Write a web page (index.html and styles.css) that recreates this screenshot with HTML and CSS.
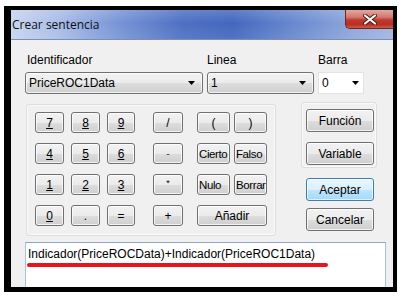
FILE: index.html
```html
<!DOCTYPE html>
<html lang="es">
<head>
    <meta charset="UTF-8">
    <meta name="viewport" content="width=device-width, initial-scale=1.0">
    <title>Crear sentencia</title>
    <link rel="stylesheet" href="styles.css">
</head>
<body>
    <div class="window">
        <div class="titlebar">
            <span class="title">Crear sentencia</span>
            <button class="close-button" aria-label="Cerrar">
                <svg viewBox="0 0 14 11" width="14" height="11">
                    <path d="M2 1.5 L12 9.5 M12 1.5 L2 9.5" stroke="#4a1a14" stroke-width="4" stroke-linecap="round"/>
                    <path d="M2 1.5 L12 9.5 M12 1.5 L2 9.5" stroke="#ffffff" stroke-width="2.2" stroke-linecap="round"/>
                </svg>
            </button>
        </div>

        <div class="dialog-body">
            <div class="fields">
                <div class="field field-id">
                    <label class="field-label">Identificador</label>
                    <div class="combo">
                        <span>PriceROC1Data</span>
                        <svg class="combo-arrow" viewBox="0 0 7 4"><path d="M0 0h7L3.5 4z"/></svg>
                    </div>
                </div>
                <div class="field field-line">
                    <label class="field-label">Linea</label>
                    <div class="combo">
                        <span>1</span>
                        <svg class="combo-arrow" viewBox="0 0 7 4"><path d="M0 0h7L3.5 4z"/></svg>
                    </div>
                </div>
                <div class="field field-bar">
                    <label class="field-label">Barra</label>
                    <div class="combo combo-plain">
                        <span>0</span>
                        <svg class="combo-arrow" viewBox="0 0 7 4"><path d="M0 0h7L3.5 4z"/></svg>
                    </div>
                </div>
            </div>

            <div class="middle">
                <div class="keypad">
                    <div class="key-row">
                        <div class="num-group">
                            <button class="btn key"><u>7</u></button>
                            <button class="btn key"><u>8</u></button>
                            <button class="btn key narrow"><u>9</u></button>
                        </div>
                        <button class="btn key op">/</button>
                        <div class="fn-group">
                            <button class="btn key fn">(</button>
                            <button class="btn key fn">)</button>
                        </div>
                    </div>
                    <div class="key-row">
                        <div class="num-group">
                            <button class="btn key"><u>4</u></button>
                            <button class="btn key"><u>5</u></button>
                            <button class="btn key narrow"><u>6</u></button>
                        </div>
                        <button class="btn key op small-sym">-</button>
                        <div class="fn-group">
                            <button class="btn key fn tight">Cierto</button>
                            <button class="btn key fn tight">Falso</button>
                        </div>
                    </div>
                    <div class="key-row">
                        <div class="num-group">
                            <button class="btn key"><u>1</u></button>
                            <button class="btn key"><u>2</u></button>
                            <button class="btn key narrow"><u>3</u></button>
                        </div>
                        <button class="btn key op small-sym star">*</button>
                        <div class="fn-group">
                            <button class="btn key fn tight">Nulo</button>
                            <button class="btn key fn tight">Borrar</button>
                        </div>
                    </div>
                    <div class="key-row">
                        <div class="num-group">
                            <button class="btn key"><u>0</u></button>
                            <button class="btn key">.</button>
                            <button class="btn key narrow">=</button>
                        </div>
                        <button class="btn key op">+</button>
                        <div class="fn-group">
                            <button class="btn key wide">Añadir</button>
                        </div>
                    </div>
                </div>

                <div class="side">
                    <div class="side-group">
                        <button class="btn side-button">Función</button>
                        <button class="btn side-button">Variable</button>
                    </div>
                    <button class="btn side-button btn-default">Aceptar</button>
                    <button class="btn side-button">Cancelar</button>
                </div>
            </div>

            <div class="expression">
                <span class="expression-text">Indicador(PriceROCData)+Indicador(PriceROC1Data)</span>
                <span class="mark"></span>
            </div>
        </div>
    </div>
</body>
</html>
```

FILE: styles.css
```css
* {
    margin: 0;
    padding: 0;
    box-sizing: border-box;
}

body {
    font-family: 'Liberation Sans', Arial, sans-serif;
    font-size: 12px;
    background-color: #FFFFFF;
    color: #000000;
}

.window {
    margin: 6px 0 0 4px;
    width: 393px;
    height: 286px;
    border-style: solid;
    border-color: #000000;
    border-width: 4px 4px 5px 7px;
    background-color: #F0F0F0;
    display: flex;
    flex-direction: column;
    overflow: hidden;
}

.titlebar {
    height: 30px;
    flex-shrink: 0;
    display: flex;
    align-items: flex-start;
    background:
        linear-gradient(rgba(255,255,255,0.16), rgba(255,255,255,0) 45%, rgba(255,255,255,0.08)),
        linear-gradient(to right, #C7D5EF 0%, #AABEE8 12%, #7795D6 28%, #4E6FC2 45%, #4467BE 58%, #6A8AD0 75%, #8FA8DC 90%, #A1B6E1 100%);
    border-bottom: 1px solid #7E8EAE;
}

.title {
    font-family: 'Open Sans', 'Noto Sans', sans-serif;
    font-size: 12px;
    line-height: 16px;
    margin: 7px 0 0 1px;
    color: #101010;
}

.close-button {
    margin-left: auto;
    width: 48px;
    height: 19px;
    border: 1px solid #6A2A22;
    border-top: none;
    border-right: none;
    border-radius: 0 0 0 5px;
    background: linear-gradient(#E4A79E 0%, #D3786C 40%, #C23A2C 55%, #B92E22 80%, #CF5A48 100%);
    display: flex;
    align-items: center;
    justify-content: center;
}

.dialog-body {
    flex: 1;
    padding: 13px 0 0 14px;
    overflow: hidden;
}

.fields {
    display: flex;
    gap: 4px;
}

.field-label {
    display: block;
    line-height: 14px;
    margin-bottom: 5px;
}

.field-id { width: 178px; }
.field-id .field-label { padding-left: 2px; }
.field-line { width: 107px; }
.field-bar { width: 46px; }

.combo {
    height: 22px;
    display: flex;
    align-items: center;
    justify-content: space-between;
    padding: 0 7px 0 3px;
    border: 1px solid #707070;
    border-radius: 3px;
    background: linear-gradient(#F2F2F2 0%, #EBEBEB 50%, #DDDDDD 51%, #CFCFCF 100%);
    box-shadow: inset 0 0 0 1px rgba(255,255,255,0.7);
}

.combo-plain {
    background: #FFFFFF;
    border-color: #E2E3EA;
    border-radius: 0;
    box-shadow: none;
    padding: 0 4px 0 3px;
}

.combo-arrow {
    width: 7px;
    height: 4px;
    fill: #000000;
}

.middle {
    display: flex;
    align-items: flex-start;
    margin-top: 8px;
}

.keypad {
    margin: 2px 0 0 1px;
    width: 250px;
    height: 132px;
    padding: 7px 0 0 8px;
    border: 1px solid #D5DFE5;
    border-radius: 3px;
    box-shadow: inset 0 0 0 1px #FAFAFA;
    display: flex;
    flex-direction: column;
    gap: 10px;
}

.key-row {
    display: flex;
    height: 21px;
}

.num-group {
    display: flex;
    gap: 7px;
}

.fn-group {
    display: flex;
    gap: 4px;
    margin-left: 14px;
}

.btn {
    font-family: inherit;
    font-size: 12px;
    color: #000000;
    border: 1px solid #707070;
    border-radius: 3px;
    background: linear-gradient(#F2F2F2 0%, #EBEBEB 50%, #DDDDDD 51%, #CFCFCF 100%);
    box-shadow: inset 0 0 0 1px rgba(255,255,255,0.75);
    display: flex;
    align-items: center;
    justify-content: center;
    white-space: nowrap;
    overflow: hidden;
}

.key {
    width: 29px;
    height: 21px;
}

.key.narrow { width: 28px; }

.op {
    width: 30px;
    margin-left: 18px;
}

.small-sym {
    font-size: 9px;
}

.star {
    align-items: flex-start;
    padding-top: 3px;
}

.fn { width: 33px; }

.tight {
    justify-content: flex-start;
    padding-left: 1px;
    font-size: 11.5px;
    letter-spacing: -0.4px;
}

.wide { width: 70px; }

.side {
    margin-left: 25px;
    width: 76px;
    display: flex;
    flex-direction: column;
}

.side-group {
    height: 66px;
    padding: 6px 0 0 4px;
    border: 1px solid #D5DFE5;
    border-radius: 3px;
    box-shadow: inset 0 0 0 1px #FAFAFA;
    display: flex;
    flex-direction: column;
    gap: 10px;
}

.side-button {
    width: 68px;
    height: 23px;
    flex-shrink: 0;
}

.side > .side-button {
    margin-left: 5px;
    margin-top: 7px;
}

.side > .btn-default {
    margin-top: 10px;
    border-color: #3C7FB1;
    background: linear-gradient(#EAF6FD 0%, #D9F0FC 50%, #BEE6FD 51%, #A7D9F5 100%);
    box-shadow: inset 0 0 0 1px rgba(255,255,255,0.6);
}

.expression {
    position: relative;
    margin-top: 6px;
    width: 361px;
    height: 60px;
    padding: 4px 0 0 2px;
    border: 1px solid #A9C2DB;
    border-top-color: #8EA6C4;
    background: #FFFFFF;
}

.expression-text {
    line-height: 14px;
}

.mark {
    position: absolute;
    left: 1px;
    top: 20px;
    width: 301px;
    height: 4px;
    border-radius: 2px;
    background: #E8141E;
}
```
